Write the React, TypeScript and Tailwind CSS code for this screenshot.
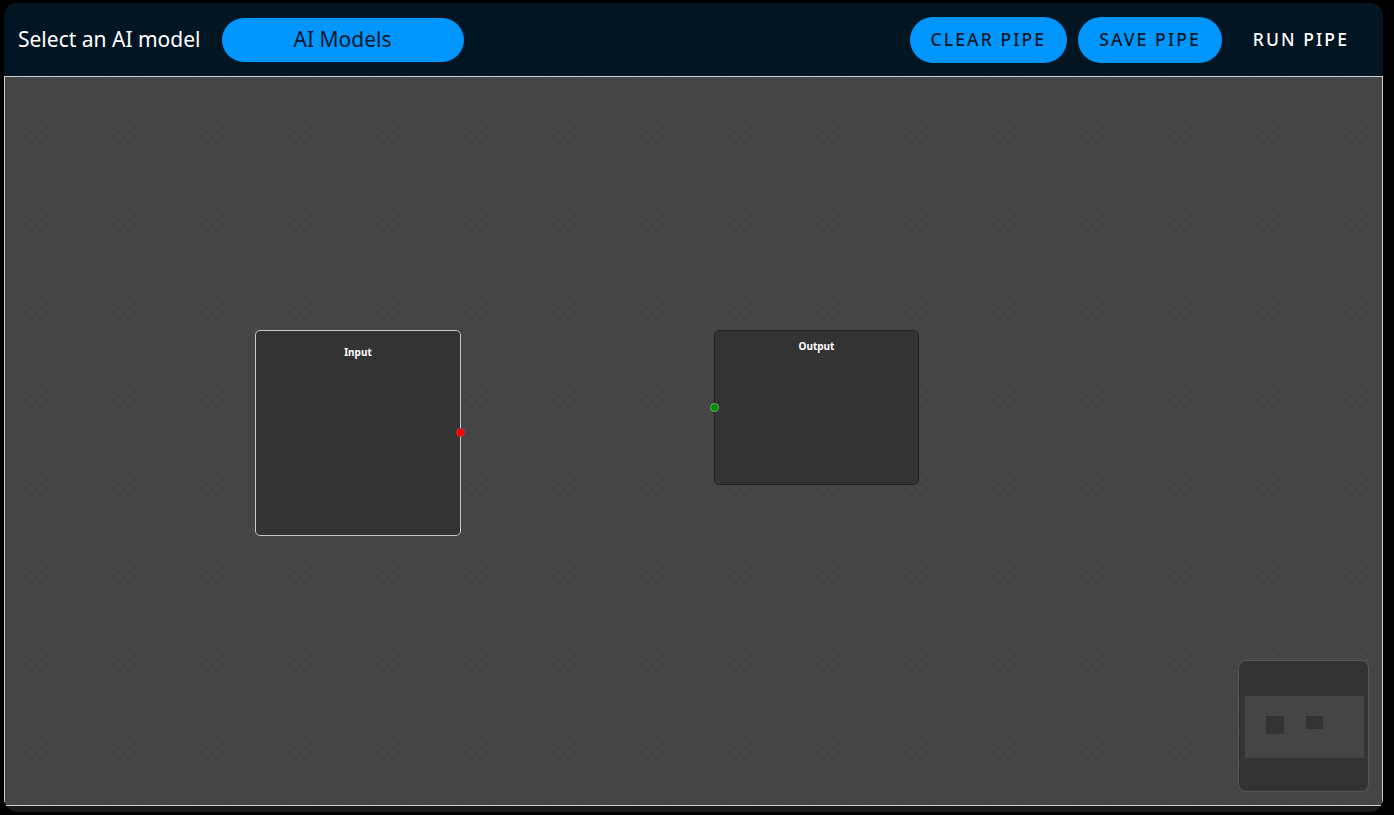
import React from 'react'

function FlowNode({ label, selected, className, children }: { label: string; selected?: boolean; className: string; children?: React.ReactNode }) {
  return (
    <div
      className={`absolute rounded-[5px] bg-[#333333] border ${selected ? 'border-[#c8c8c8]' : 'border-[#222222]'} ${className}`}
    >
      <div className="text-center text-[10px] font-bold text-white leading-none">{label}</div>
      {children}
    </div>
  )
}

export default function App() {
  return (
    <div className="min-h-screen w-full bg-black pl-[4px] pt-[3px]" style={{ fontFamily: '"Noto Sans", "Open Sans", sans-serif' }}>
      <div className="w-[1379px] h-[809px] rounded-[14px] overflow-hidden bg-[#1b1b1b] flex flex-col">
        {/* header */}
        <div className="h-[73px] shrink-0 bg-[#011523] flex items-center pl-[14px] pr-[34px]">
          <span className="text-white text-[21px]">Select an AI model</span>
          <button className="ml-[21px] w-[242px] h-[44px] rounded-full bg-[#0096ff] text-[#0b1826] text-[21px]">
            AI Models
          </button>
          <div className="ml-auto flex items-center gap-[11px]">
            <button className="h-[46px] px-[21px] rounded-full bg-[#0096ff] text-[#0b1826] text-[17.5px] font-medium tracking-[0.12em]">
              CLEAR PIPE
            </button>
            <button className="h-[46px] px-[21px] rounded-full bg-[#0096ff] text-[#0b1826] text-[17.5px] font-medium tracking-[0.12em]">
              SAVE PIPE
            </button>
            <button className="h-[46px] pl-[20px] text-white text-[17.5px] font-medium tracking-[0.12em]">
              RUN PIPE
            </button>
          </div>
        </div>
        {/* canvas */}
        <div className="relative h-[730px] shrink-0 border border-[#cfcfcf] bg-[#454545] bg-[radial-gradient(#4f4f4f_1px,transparent_1px)] bg-[size:11px_11px] bg-[position:4px_6px]">
          <FlowNode label="Input" selected className="left-[250px] top-[253px] w-[206px] h-[206px] pt-[16px]">
            <span className="absolute right-[-5px] top-[97px] w-[9px] h-[9px] rounded-full bg-[#ff0000] border border-[#bb3333]" />
          </FlowNode>
          <FlowNode label="Output" className="left-[709px] top-[253px] w-[205px] h-[155px] pt-[10px]">
            <span className="absolute left-[-5px] top-[72px] w-[9px] h-[9px] rounded-full bg-[#008800] border border-[#66bb66]" />
          </FlowNode>
          {/* minimap */}
          <div className="absolute right-[13px] bottom-[13px] w-[131px] h-[132px] rounded-[8px] bg-[#333333] border border-[#575757] flex items-center justify-center">
            <div className="relative w-[119px] h-[62px] bg-[#454545] mt-[2px] ml-[2px]">
              <div className="absolute left-[21px] top-[20px] w-[18px] h-[18px] bg-[#333333]" />
              <div className="absolute left-[61px] top-[20px] w-[17px] h-[13px] bg-[#333333]" />
            </div>
          </div>
        </div>
      </div>
    </div>
  )
}
